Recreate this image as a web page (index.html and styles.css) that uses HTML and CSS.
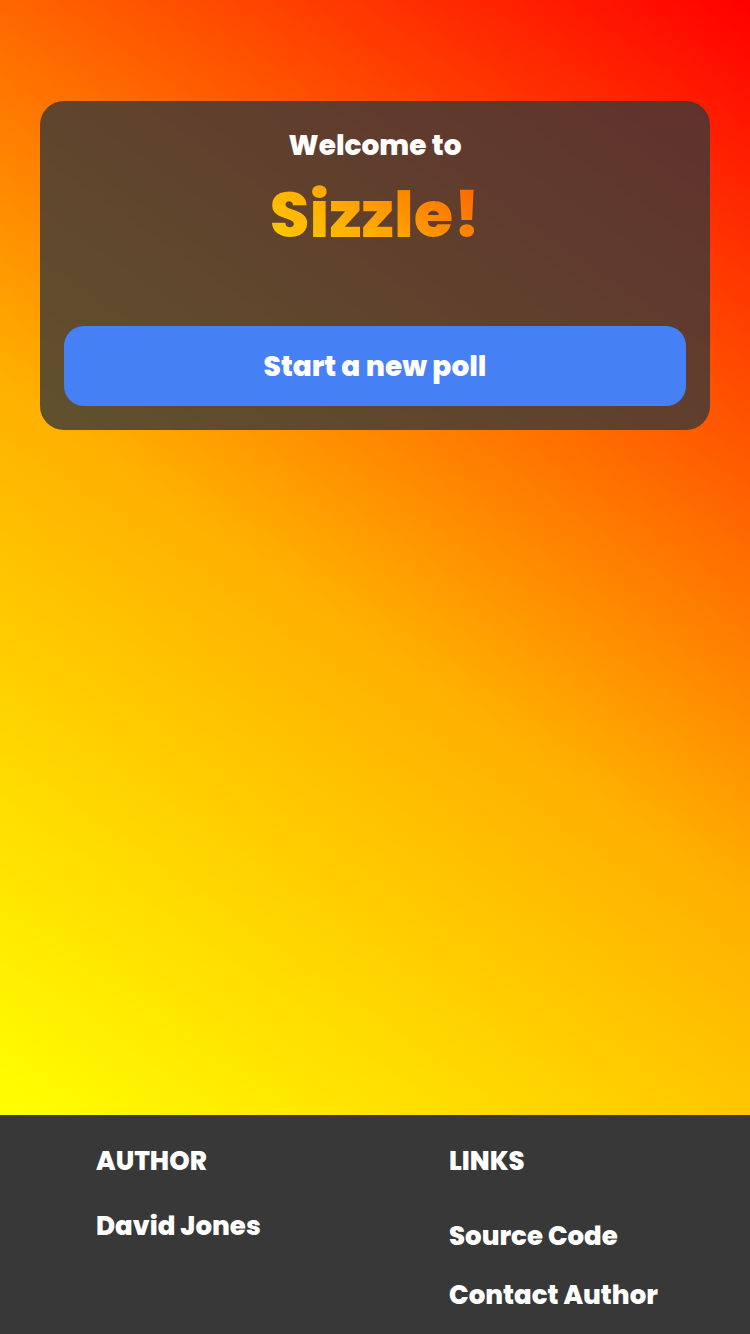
FILE: index.html
```html
<!DOCTYPE html>
<html lang="en">
<head>
<meta charset="utf-8">
<meta name="viewport" content="width=device-width, initial-scale=1">
<title>Sizzle!</title>
<link rel="stylesheet" href="styles.css">
</head>
<body>
<main class="hero">
  <section class="card">
    <h1 class="heading">
      <span class="welcome">Welcome to</span>
      <span class="brand">Sizzle!</span>
    </h1>
    <button class="start" type="button">Start a new poll</button>
  </section>
</main>
<footer class="footer">
  <section class="column">
    <h2 class="title">AUTHOR</h2>
    <p class="author">David Jones</p>
  </section>
  <nav class="column">
    <h2 class="title">LINKS</h2>
    <ul class="links">
      <li><a href="#source">Source Code</a></li>
      <li><a href="#contact">Contact Author</a></li>
    </ul>
  </nav>
</footer>
</body>
</html>
```

FILE: styles.css
```css
:root {
  --flame: linear-gradient(35deg, #ff0, #ffb000 45%, #f00);
}

* {
  box-sizing: border-box;
}

body {
  display: flex;
  flex-direction: column;
  min-height: 100vh;
  margin: 0;
  background: #383838;
  color: #fff;
  font-family: Poppins, Inter, sans-serif;
  font-weight: 800;
}

h1, h2, p, ul {
  margin: 0;
  padding: 0;
  font-weight: inherit;
}

.hero {
  flex: 1;
  padding: 101px 40px 40px;
  background: var(--flame);
}

.card {
  padding: 24px;
  border-radius: 24px;
  background: rgba(56, 56, 56, 0.8);
  text-align: center;
}

.heading {
  margin-bottom: 64px;
}

.welcome {
  display: block;
  font-size: 28px;
  line-height: 42px;
}

.brand {
  display: block;
  background: var(--flame);
  background-clip: text;
  color: transparent;
  font-size: 64px;
  line-height: 95px;
}

.start {
  width: 100%;
  padding: 20px 16px 18px;
  border: 0;
  border-radius: 20px;
  background: #4580f5;
  color: inherit;
  font: inherit;
  font-size: 28px;
  line-height: 42px;
}

.footer {
  display: grid;
  grid-template-columns: 353fr 301fr;
  padding: 24px 0 17px 96px;
  font-size: 26px;
  line-height: 44px;
}

.title {
  font-size: 26px;
}

.author {
  margin-top: 21px;
}

.links {
  display: grid;
  gap: 15px;
  margin-top: 31px;
  list-style: none;
}

.links a {
  color: inherit;
  text-decoration: none;
}
```
